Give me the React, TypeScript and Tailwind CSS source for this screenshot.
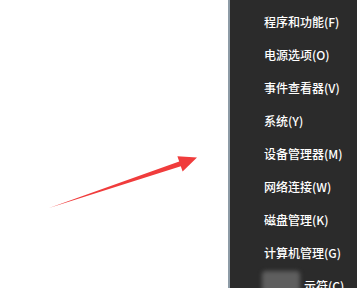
const items = [
  '程序和功能(F)',
  '电源选项(O)',
  '事件查看器(V)',
  '系统(Y)',
  '设备管理器(M)',
  '网络连接(W)',
  '磁盘管理(K)',
  '计算机管理(G)',
];

function Arrow() {
  return (
    <svg width="228" height="288" viewBox="0 0 228 288" className="block">
      <polygon
        points="49,208 179.2,161.5 177.4,156.3 197,157.5 182.6,171.5 180.8,166.3"
        fill="#f03c3c"
      />
    </svg>
  );
}

export default function App() {
  return (
    <div className="flex h-[288px] w-[357px] overflow-hidden bg-white">
      {/* 左侧空白 + 红色箭头 */}
      <div className="w-[228px] shrink-0">
        <Arrow />
      </div>

      {/* Win+X 菜单 */}
      <div
        className="flex-1 border-l-2 border-[#8d9ba6] bg-[#2b2b2b] pt-[5px] pl-[34px] text-[12px] font-medium text-white"
        style={{ fontFamily: '"Noto Sans CJK SC", "Noto Sans", sans-serif' }}
      >
        {items.map((label) => (
          <div key={label} className="flex h-[33px] items-center whitespace-nowrap">
            {label}
          </div>
        ))}
        <div className="relative flex h-[33px] items-center whitespace-nowrap">
          <div className="absolute left-[-2px] top-[2px] h-[40px] w-[38px] rounded-sm bg-[#5e5e5e] blur-[2px]" />
          <span className="relative pl-[40px]">示符(C)</span>
        </div>
      </div>
    </div>
  );
}
